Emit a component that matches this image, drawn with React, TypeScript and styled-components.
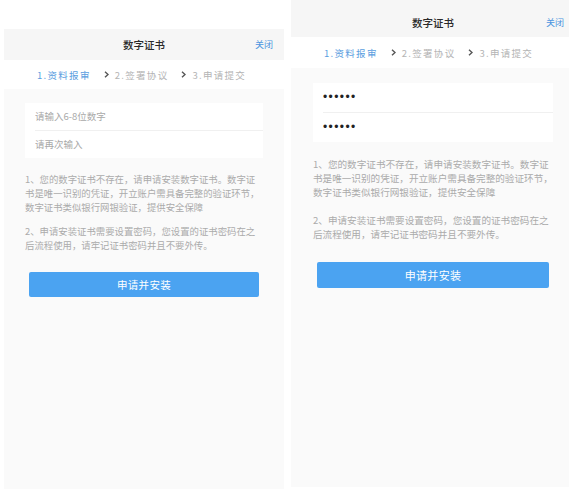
import React from "react";
import styled, { createGlobalStyle } from "styled-components";

const Global = createGlobalStyle`
  html, body { margin: 0; padding: 0; background: #ffffff; }
  body { font-family: "Noto Sans CJK SC", "Noto Sans", sans-serif; }
  * { box-sizing: border-box; }
`;

interface Cfg {
  top: number;
  width: number;
  height: number;
  headerH: number;
  headerPadTop: number;
  stepsH: number;
  bodyPadTop: number;
  side: number;
  rowH: number;
  textGap: number;
  paraGap: number;
  textSize: number;
  btnGap: number;
  btnSide: number;
  btnH: number;
  btnSize: number;
  password: boolean;
}

const Page = styled.div`
  width: 569px;
  height: 497px;
  overflow: hidden;
  display: flex;
  align-items: flex-start;
  gap: 7px;
  padding-left: 4px;
`;

const Phone = styled.div<{ $top: number; $w: number; $h: number }>`
  margin-top: ${(p) => p.$top}px;
  width: ${(p) => p.$w}px;
  height: ${(p) => p.$h}px;
  flex-shrink: 0;
  display: flex;
  flex-direction: column;
  background: #fafafa;
`;

const Header = styled.div<{ $h: number; $pt: number }>`
  height: ${(p) => p.$h}px;
  padding: ${(p) => p.$pt}px 11px 0;
  background: #f6f6f6;
  display: grid;
  grid-template-columns: 1fr auto 1fr;
  align-items: center;
`;

const Title = styled.div`
  grid-column: 2;
  font-size: 10.5px;
  font-weight: 500;
  color: #2a2a2a;
`;

const Close = styled.div`
  grid-column: 3;
  justify-self: end;
  font-size: 9px;
  color: #4a94e0;
`;

const Steps = styled.div<{ $h: number }>`
  height: ${(p) => p.$h}px;
  background: #ffffff;
  display: flex;
  align-items: center;
  padding-left: 33px;
`;

const Step = styled.div<{ $active?: boolean; $first?: boolean }>`
  display: flex;
  align-items: center;
  margin-left: ${(p) => (p.$first ? 0 : 13)}px;
  font-size: 9.5px;
  letter-spacing: 1.3px;
  color: ${(p) => (p.$active ? "#5b9ee0" : "#b4b4b4")};
  white-space: nowrap;
`;

const Chevron = styled.svg`
  width: 5px;
  height: 7px;
  margin-right: 6px;
`;

const Body = styled.div<{ $pt: number; $side: number }>`
  flex: 1;
  padding: ${(p) => p.$pt}px ${(p) => p.$side}px 0;
  display: flex;
  flex-direction: column;
`;

const Form = styled.div`
  background: #ffffff;
  display: flex;
  flex-direction: column;
`;

const Row = styled.div<{ $h: number; $divider?: boolean }>`
  height: ${(p) => p.$h}px;
  margin-left: 10px;
  display: flex;
  align-items: center;
  border-bottom: ${(p) => (p.$divider ? "1px solid #f0f0f0" : "none")};
`;

const Field = styled.input<{ $pw?: boolean }>`
  border: none;
  outline: none;
  background: transparent;
  width: 100%;
  padding: 0;
  font-family: ${(p) => (p.$pw ? `"Liberation Sans", sans-serif` : `"Noto Sans CJK SC", sans-serif`)};
  font-size: ${(p) => (p.$pw ? 12 : 9.5)}px;
  letter-spacing: ${(p) => (p.$pw ? 1.4 : 0)}px;
  color: #222;
  &::placeholder {
    color: #a9a9a9;
  }
`;

const Notes = styled.div<{ $mt: number; $gap: number; $size: number }>`
  margin-top: ${(p) => p.$mt}px;
  display: flex;
  flex-direction: column;
  gap: ${(p) => p.$gap}px;
  font-size: ${(p) => p.$size}px;
  line-height: 14px;
  color: #ababab;
  white-space: nowrap;
`;

const Para = styled.p`
  margin: 0;
`;

const Button = styled.button<{ $mt: number; $mx: number; $h: number; $size: number }>`
  margin: ${(p) => p.$mt}px ${(p) => p.$mx}px 0;
  height: ${(p) => p.$h}px;
  border: none;
  border-radius: 2px;
  background: #4ba3f1;
  color: #ffffff;
  font-family: "Noto Sans CJK SC", sans-serif;
  font-size: ${(p) => p.$size}px;
  font-weight: 400;
  letter-spacing: 0.3px;
`;

const para1 = [
  "1、您的数字证书不存在，请申请安装数字证书。数字证",
  "书是唯一识别的凭证，开立账户需具备完整的验证环节，",
  "数字证书类似银行网银验证，提供安全保障",
];
const para2 = [
  "2、申请安装证书需要设置密码，您设置的证书密码在之",
  "后流程使用，请牢记证书密码并且不要外传。",
];

const steps = ["1.资料报审", "2.签署协议", "3.申请提交"];

function Lines({ lines }: { lines: string[] }) {
  return (
    <Para>
      {lines.map((l, i) => (
        <React.Fragment key={i}>
          {l}
          {i < lines.length - 1 && <br />}
        </React.Fragment>
      ))}
    </Para>
  );
}

function Screen({ c }: { c: Cfg }) {
  return (
    <Phone $top={c.top} $w={c.width} $h={c.height}>
      <Header $h={c.headerH} $pt={c.headerPadTop}>
        <Title>数字证书</Title>
        <Close>关闭</Close>
      </Header>
      <Steps $h={c.stepsH}>
        {steps.map((s, i) => (
          <Step key={s} $active={i === 0} $first={i === 0}>
            {i > 0 && (
              <Chevron viewBox="0 0 5 7">
                <path d="M1 0.8 L4 3.5 L1 6.2" fill="none" stroke="#555" strokeWidth="1.4" />
              </Chevron>
            )}
            {s}
          </Step>
        ))}
      </Steps>
      <Body $pt={c.bodyPadTop} $side={c.side}>
        <Form>
          <Row $h={c.rowH} $divider>
            {c.password ? (
              <Field $pw type="password" defaultValue="123456" readOnly />
            ) : (
              <Field placeholder="请输入6-8位数字" readOnly />
            )}
          </Row>
          <Row $h={c.rowH}>
            {c.password ? (
              <Field $pw type="password" defaultValue="123456" readOnly />
            ) : (
              <Field placeholder="请再次输入" readOnly />
            )}
          </Row>
        </Form>
        <Notes $mt={c.textGap} $gap={c.paraGap} $size={c.textSize}>
          <Lines lines={para1} />
          <Lines lines={para2} />
        </Notes>
        <Button $mt={c.btnGap} $mx={c.btnSide - c.side} $h={c.btnH} $size={c.btnSize}>
          申请并安装
        </Button>
      </Body>
    </Phone>
  );
}

const left: Cfg = {
  top: 29,
  width: 280,
  height: 460,
  headerH: 31,
  headerPadTop: 0,
  stepsH: 29,
  bodyPadTop: 14,
  side: 21,
  rowH: 27.5,
  textGap: 14,
  paraGap: 10,
  textSize: 9.4,
  btnGap: 20,
  btnSide: 25,
  btnH: 25,
  btnSize: 10.5,
  password: false,
};

const right: Cfg = {
  top: 0,
  width: 284,
  height: 487,
  headerH: 37,
  headerPadTop: 8,
  stepsH: 31,
  bodyPadTop: 15,
  side: 22,
  rowH: 29.5,
  textGap: 15,
  paraGap: 14,
  textSize: 9.6,
  btnGap: 21,
  btnSide: 26,
  btnH: 26,
  btnSize: 11,
  password: true,
};

export default function App() {
  return (
    <>
      <Global />
      <Page>
        <Screen c={left} />
        <Screen c={right} />
      </Page>
    </>
  );
}
